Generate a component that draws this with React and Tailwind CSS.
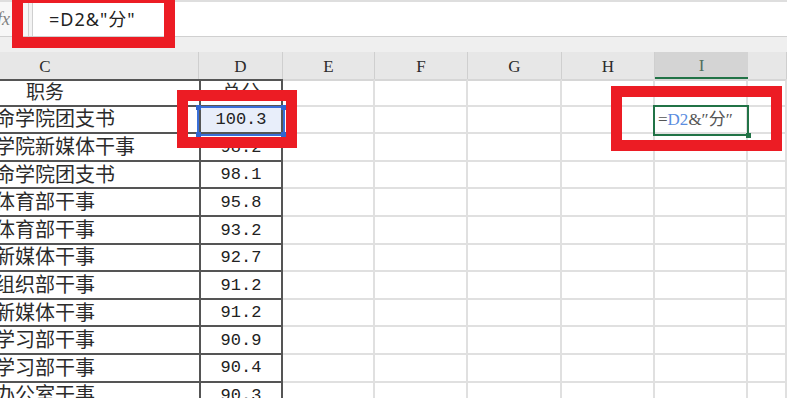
import React from 'react'

const cols = [
  { key: 'E', w: 'w-[92px]' },
  { key: 'F', w: 'w-[93px]' },
  { key: 'G', w: 'w-[94px]' },
  { key: 'H', w: 'w-[93px]' },
  { key: 'I', w: 'w-[93px]' },
  { key: 'J', w: 'flex-1' },
]

const rows = [
  ['命学院团支书', '100.3'],
  ['学院新媒体干事', '98.2'],
  ['命学院团支书', '98.1'],
  ['体育部干事', '95.8'],
  ['体育部干事', '93.2'],
  ['新媒体干事', '92.7'],
  ['组织部干事', '91.2'],
  ['新媒体干事', '91.2'],
  ['学习部干事', '90.9'],
  ['学习部干事', '90.4'],
  ['办公室干事', '90.3'],
]

const cjk = "font-['Liberation_Serif','Noto_Sans_CJK_SC',serif]"

function RedBox({ className }) {
  return <div className={`pointer-events-none absolute border-[11px] border-[#ec1c24] ${className}`} />
}

function Handle({ className }) {
  return <span className={`absolute h-[5px] w-[5px] bg-[#2f66d0] ${className}`} />
}

export default function App() {
  return (
    <div className="relative h-[398px] w-[787px] overflow-hidden bg-white text-[#2b2b2b]">
      {/* formula bar */}
      <div className="h-[2px] bg-[#dedede]" />
      <div className="flex h-[35px] items-center border-b border-[#d0d0d0] bg-white">
        <div className="flex h-full w-[28px] items-center bg-[#f7f7f7]">
          <span className="-ml-[3px] font-['Liberation_Serif',serif] text-[18px] italic text-[#808080]">fx</span>
        </div>
        <div className="h-full w-[5px] border-x border-[#cfcfcf] bg-[#f3f3f3]" />
        <div className="pl-[16px] font-['Noto_Sans','Noto_Sans_CJK_SC',sans-serif] text-[18px] tracking-[1px] text-[#222]">
          =D2&amp;"分"
        </div>
      </div>
      <div className="h-[15px] bg-[#efefef]" />

      {/* column headers */}
      <div className={`flex h-[27px] bg-[#e7e7e7] ${cjk} text-[17px]`}>
        <div className="flex w-[199px] items-center justify-center border-r border-[#cfcfcf] pr-[108px] pt-[2px]">C</div>
        <div className="flex w-[84px] items-center justify-center border-r border-[#cfcfcf] pt-[2px]">D</div>
        {cols.map((c) => (
          <div
            key={c.key}
            className={`flex ${c.w} items-center justify-center pt-[2px] ${
              c.key === 'I'
                ? 'border-b-2 border-[#217346] bg-[#d4d4d4] text-[#4f6f60]'
                : 'border-r border-[#cfcfcf]'
            }`}
          >
            {c.key === 'J' ? '' : c.key}
          </div>
        ))}
      </div>

      {/* header data row */}
      <div className={`flex h-[27.6px] ${cjk} text-[19px]`}>
        <div className="flex w-[199px] items-center border-y-2 border-[#555] pl-[26px]">职务</div>
        <div className="flex w-[84px] items-center justify-center border-2 border-[#555]">总分</div>
        {cols.map((c) => (
          <div key={c.key} className={`${c.w} border-r-2 border-b-2 border-[#e0e0e0] border-t-2 border-t-[#d6d6d6]`} />
        ))}
      </div>

      {rows.map(([name, score], i) => (
        <div key={i} className="flex h-[27.6px]">
          <div className={`flex w-[199px] items-center overflow-hidden border-b-2 border-[#555] ${cjk} text-[20px]`}>
            <span className="-ml-[5px] whitespace-nowrap">{name}</span>
          </div>
          <div
            className={`flex w-[84px] items-center justify-center border-x-2 border-b-2 border-[#555] pt-[1px] font-['Liberation_Mono',monospace] text-[17px] text-[#222] ${
              i === 0 ? 'bg-[#e8eefa]' : ''
            }`}
          >
            {score}
          </div>
          {cols.map((c) => (
            <div key={c.key} className={`flex ${c.w} items-center border-r-2 border-b-2 border-[#e0e0e0]`}>
              {i === 0 && c.key === 'I' ? (
                <span className={`pl-[3px] whitespace-nowrap text-[17px] ${cjk}`}>
                  <span className="text-[#555]">=</span>
                  <span className="text-[#5b8de0]">D2</span>
                  <span className="text-[#555]">&amp;″分″</span>
                </span>
              ) : null}
            </div>
          ))}
        </div>
      ))}

      {/* selection on D2 */}
      <div className="pointer-events-none absolute left-[197px] top-[106px] h-[30px] w-[88px] border-2 border-[#3a6fd8]">
        <Handle className="-left-[3px] -top-[3px]" />
        <Handle className="-right-[3px] -top-[3px]" />
        <Handle className="-bottom-[3px] -left-[3px]" />
        <Handle className="-bottom-[3px] -right-[3px]" />
      </div>

      {/* selection on I2 */}
      <div className="pointer-events-none absolute left-[653px] top-[105px] h-[31px] w-[96px] border-2 border-[#217346]">
        <span className="absolute -bottom-[4px] -right-[4px] h-[5px] w-[5px] bg-[#217346]" />
      </div>

      <RedBox className="left-[12px] -top-[8px] h-[56px] w-[163px]" />
      <RedBox className="left-[177px] top-[90px] h-[58px] w-[120px]" />
      <RedBox className="left-[611px] top-[86px] h-[65px] w-[171px]" />
    </div>
  )
}
